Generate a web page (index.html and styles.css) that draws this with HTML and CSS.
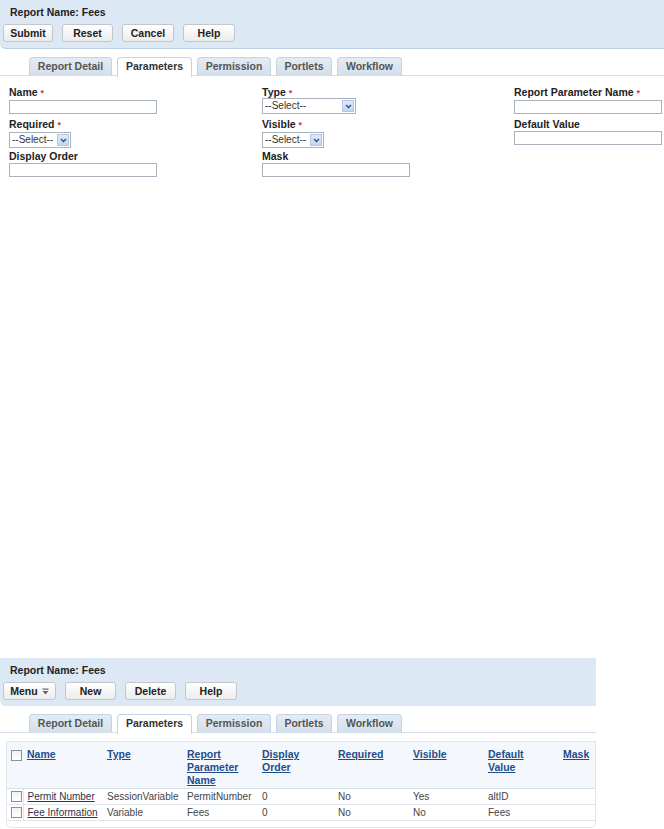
FILE: index.html
```html
<!DOCTYPE html>
<html lang="en">
<head>
    <meta charset="UTF-8">
    <title>Report Parameters</title>
    <link rel="stylesheet" href="styles.css">
</head>
<body>
    <!-- edit view -->
    <div class="section">
        <div class="toolbar">
            <div class="report-name">Report Name: Fees</div>
            <div class="buttons">
                <button class="btn btn-submit">Submit</button>
                <button class="btn btn-reset">Reset</button>
                <button class="btn btn-cancel">Cancel</button>
                <button class="btn btn-help">Help</button>
            </div>
        </div>
        <div class="tabs">
            <span class="tab tab-detail">Report Detail</span>
            <span class="tab tab-params active">Parameters</span>
            <span class="tab tab-perm">Permission</span>
            <span class="tab tab-portlets">Portlets</span>
            <span class="tab tab-workflow">Workflow</span>
        </div>

        <div class="form-grid">
            <div class="field">
                <label>Name <span class="req">*</span></label>
                <input type="text" class="text-input">
            </div>
            <div class="field">
                <label>Type <span class="req">*</span></label>
                <div class="select select-wide"><span class="select-text">--Select--</span><span class="select-arrow"><svg width="7" height="5" viewBox="0 0 7 5"><path d="M1 1 L3.5 3.5 L6 1" fill="none" stroke="#2d4f86" stroke-width="1.4"/></svg></span></div>
            </div>
            <div class="field">
                <label>Report Parameter Name <span class="req">*</span></label>
                <input type="text" class="text-input">
            </div>

            <div class="field">
                <label>Required <span class="req">*</span></label>
                <div class="select"><span class="select-text">--Select--</span><span class="select-arrow"><svg width="7" height="5" viewBox="0 0 7 5"><path d="M1 1 L3.5 3.5 L6 1" fill="none" stroke="#2d4f86" stroke-width="1.4"/></svg></span></div>
            </div>
            <div class="field">
                <label>Visible <span class="req">*</span></label>
                <div class="select"><span class="select-text">--Select--</span><span class="select-arrow"><svg width="7" height="5" viewBox="0 0 7 5"><path d="M1 1 L3.5 3.5 L6 1" fill="none" stroke="#2d4f86" stroke-width="1.4"/></svg></span></div>
            </div>
            <div class="field">
                <label>Default Value</label>
                <input type="text" class="text-input">
            </div>

            <div class="field">
                <label>Display Order</label>
                <input type="text" class="text-input">
            </div>
            <div class="field">
                <label>Mask</label>
                <input type="text" class="text-input">
            </div>
        </div>
    </div>

    <!-- list view -->
    <div class="section section-list">
        <div class="toolbar">
            <div class="report-name">Report Name: Fees</div>
            <div class="buttons">
                <button class="btn btn-menu">Menu <svg width="7" height="7" viewBox="0 0 7 7"><rect x="0.5" y="0.5" width="6" height="1.2" fill="#666"/><path d="M0.5 3 H6.5 L3.5 6.5 Z" fill="#666"/></svg></button>
                <button class="btn btn-new">New</button>
                <button class="btn btn-delete">Delete</button>
                <button class="btn btn-help">Help</button>
            </div>
        </div>
        <div class="tabs">
            <span class="tab tab-detail">Report Detail</span>
            <span class="tab tab-params active">Parameters</span>
            <span class="tab tab-perm">Permission</span>
            <span class="tab tab-portlets">Portlets</span>
            <span class="tab tab-workflow">Workflow</span>
        </div>

        <div class="grid-box">
            <table class="param-table">
                <colgroup>
                    <col style="width:16px">
                    <col style="width:80px">
                    <col style="width:80px">
                    <col style="width:75px">
                    <col style="width:76px">
                    <col style="width:75px">
                    <col style="width:75px">
                    <col style="width:75px">
                    <col>
                </colgroup>
                <thead>
                    <tr>
                        <th class="cb-cell"><span class="checkbox"></span></th>
                        <th><a href="#">Name</a></th>
                        <th><a href="#">Type</a></th>
                        <th><a href="#">Report Parameter Name</a></th>
                        <th><a href="#">Display Order</a></th>
                        <th><a href="#">Required</a></th>
                        <th><a href="#">Visible</a></th>
                        <th><a href="#">Default Value</a></th>
                        <th><a href="#">Mask</a></th>
                    </tr>
                </thead>
                <tbody>
                    <tr>
                        <td class="cb-cell"><span class="checkbox"></span></td>
                        <td><a href="#" class="row-link">Permit Number</a></td>
                        <td>SessionVariable</td>
                        <td>PermitNumber</td>
                        <td>0</td>
                        <td>No</td>
                        <td>Yes</td>
                        <td>altID</td>
                        <td></td>
                    </tr>
                    <tr>
                        <td class="cb-cell"><span class="checkbox"></span></td>
                        <td><a href="#" class="row-link">Fee Information</a></td>
                        <td>Variable</td>
                        <td>Fees</td>
                        <td>0</td>
                        <td>No</td>
                        <td>No</td>
                        <td>Fees</td>
                        <td></td>
                    </tr>
                </tbody>
            </table>
            <div class="grid-footer"></div>
        </div>
    </div>
</body>
</html>
```

FILE: styles.css
```css
*{
    box-sizing: border-box;
}
body{
    margin: 0;
    font-family: 'Liberation Sans', Arial, sans-serif;
    font-size: 10px;
    color: #333;
    background: #fff;
}

/* toolbar */
.toolbar{
    background: #dde8f5;
    border-bottom: 1px solid #b9d0e8;
    border-bottom-left-radius: 6px;
    padding: 5px 0 6px 0;
}
.report-name{
    font-weight: bold;
    font-size: 10.5px;
    line-height: 14px;
    padding-left: 10px;
    color: #222;
}
.buttons{
    display: flex;
    gap: 9px;
    margin-top: 5px;
    padding-left: 3px;
}
.btn{
    height: 18px;
    width: 51px;
    padding: 0;
    border: 1px solid #c3c7cc;
    border-radius: 3px;
    background: linear-gradient(#ffffff, #ececec);
    font-family: 'Liberation Sans', Arial, sans-serif;
    font-weight: bold;
    font-size: 10.5px;
    color: #222;
}
.btn-submit{ width: 50px; }
.btn-cancel, .btn-help{ width: 52px; }
.btn-menu{
    width: 53px;
    display: flex;
    align-items: center;
    justify-content: center;
    gap: 4px;
}

/* tabs */
.tabs{
    display: flex;
    gap: 5px;
    margin-top: 8px;
    padding-left: 29px;
    border-bottom: 1px solid #d4dfea;
    height: 19px;
}
.tab{
    height: 19px;
    line-height: 17px;
    border: 1px solid #c6d3e0;
    border-bottom: none;
    border-radius: 4px 4px 0 0;
    background: linear-gradient(#e4ecf4, #d3dfeb);
    font-weight: bold;
    font-size: 10.5px;
    color: #555;
    text-align: center;
}
.tab.active{
    background: #fff;
    color: #333;
    height: 20px;
}
.tab-detail{ width: 83px; }
.tab-params{ width: 75px; }
.tab-perm{ width: 74px; }
.tab-portlets{ width: 56px; }
.tab-workflow{ width: 65px; }

/* form */
.form-grid{
    display: grid;
    grid-template-columns: 253px 252px 1fr;
    padding: 10px 0 0 9px;
}
.field{
    height: 32px;
}
.field label{
    display: block;
    font-weight: bold;
    font-size: 10.5px;
    line-height: 13px;
    color: #222;
}
.req{
    color: #d33;
    font-size: 9px;
}
.text-input{
    display: block;
    width: 148px;
    height: 14px;
    border: 1px solid #a9b2bd;
    padding: 0;
    margin: 0;
    background: #fff;
}
.select{
    display: flex;
    align-items: center;
    width: 62px;
    height: 16px;
    border: 1px solid #a9b2bd;
    background: #fff;
    padding: 1px;
}
.select-wide{
    width: 94px;
    margin-top: -2px;
}
.select-text{
    flex: 1;
    font-size: 10px;
    color: #333;
    padding-left: 1px;
    line-height: 12px;
}
.select-arrow{
    width: 12px;
    height: 12px;
    border: 1px solid #b4c6e2;
    background: linear-gradient(#e1eaf8, #c3d5f0);
    display: flex;
    align-items: center;
    justify-content: center;
}

/* list view */
.section-list{
    width: 596px;
    margin-top: 476px;
}
.section-list .toolbar{
    border-bottom: none;
}
.grid-box{
    margin: 8px 0 0 6px;
    border: 1px solid #dfe7ef;
    border-radius: 0 0 5px 5px;
}
.param-table{
    width: 100%;
    border-collapse: collapse;
    table-layout: fixed;
}
.param-table th{
    background: #f4f8fc;
    text-align: left;
    vertical-align: top;
    padding: 6px 10px 0 4px;
    height: 46px;
    line-height: 13px;
    border-bottom: 1px solid #d6e0ea;
}
.param-table th a{
    color: #1f4d8c;
    font-weight: bold;
    font-size: 10.5px;
}
.param-table td{
    padding: 0 4px;
    height: 16px;
    line-height: 15px;
    color: #444;
    border-bottom: 1px solid #dfe6ee;
    white-space: nowrap;
    overflow: hidden;
}
.param-table .cb-cell{
    padding: 0 0 0 4px;
}
.param-table td.cb-cell{
    border-right: 1px solid #dfe6ee;
}
.param-table th.cb-cell{
    padding-top: 8px;
}
.checkbox{
    display: block;
    width: 11px;
    height: 11px;
    border: 1px solid #8a9099;
    background: linear-gradient(#f2f2f2, #fff);
}
.param-table td .checkbox{
    margin-top: 1px;
}
.row-link{
    color: #33334d;
}
.grid-footer{
    height: 6px;
}
```
